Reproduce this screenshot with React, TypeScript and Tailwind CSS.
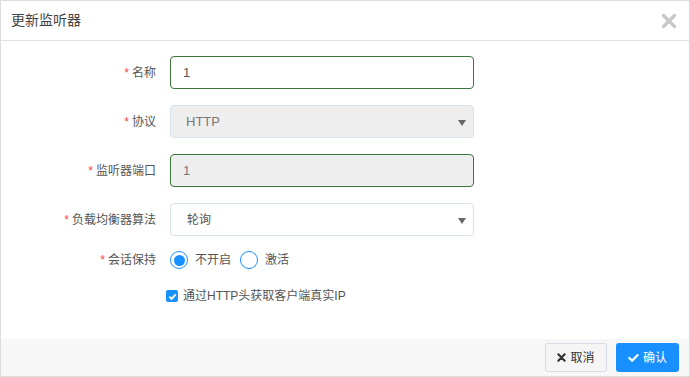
import React from "react";

const font = { fontFamily: '"Liberation Sans", "Noto Sans CJK SC", sans-serif' };

function Label({ text }: { text: string }) {
  return (
    <div className="w-[169px] shrink-0 pr-[14px] text-right text-[12px] text-[#555]">
      <span className="text-[#f04848] mr-[3px]">*</span>
      {text}
    </div>
  );
}

function Arrow() {
  return (
    <svg width="8" height="6" viewBox="0 0 8 6" className="absolute right-[7px] top-[14px]">
      <path d="M0 0 L8 0 L4 6 Z" fill="#666" />
    </svg>
  );
}

export default function App() {
  return (
    <div style={font} className="w-[690px] h-[377px] bg-white border border-[#dcdcdc] flex flex-col">
      <div className="h-[40px] shrink-0 border-b border-[#e2e2e2] flex items-center justify-between pl-[10px] pr-[12px]">
        <div className="text-[14px] text-[#444]">更新监听器</div>
        <svg width="16" height="16" viewBox="0 0 16 16">
          <path d="M2.5 2.5 L13.5 13.5 M13.5 2.5 L2.5 13.5" stroke="#c8c8c8" strokeWidth="3.4" strokeLinecap="round" />
        </svg>
      </div>
      <div className="flex-1 flex flex-col pt-[15px]">
        <div className="flex items-center h-[33px] mb-[16px]">
          <Label text="名称" />
          <div className="w-[304px] h-[33px] border border-[#3c763d] rounded-[4px] bg-white flex items-center px-[12px] text-[13px] text-[#555]">1</div>
        </div>
        <div className="flex items-center h-[33px] mb-[16px]">
          <Label text="协议" />
          <div className="relative w-[304px] h-[33px] border border-[#d8e2ec] rounded-[4px] bg-[#eeeeee] flex items-center px-[15px] text-[13px] text-[#777]">
            HTTP
            <Arrow />
          </div>
        </div>
        <div className="flex items-center h-[33px] mb-[16px]">
          <Label text="监听器端口" />
          <div className="w-[304px] h-[33px] border border-[#3c763d] rounded-[4px] bg-[#eeeeee] flex items-center px-[12px] text-[13px] text-[#777]">1</div>
        </div>
        <div className="flex items-center h-[33px] mb-[12px]">
          <Label text="负载均衡器算法" />
          <div className="relative w-[304px] h-[33px] border border-[#d8e2ec] rounded-[4px] bg-white flex items-center px-[16px] text-[12px] text-[#555]">
            轮询
            <Arrow />
          </div>
        </div>
        <div className="flex items-center h-[24px]">
          <Label text="会话保持" />
          <div className="flex items-center text-[12px] text-[#555]">
            <span className="w-[18px] h-[18px] rounded-full border-[1.5px] border-[#1890ff] flex items-center justify-center">
              <span className="w-[11px] h-[11px] rounded-full bg-[#1890ff]" />
            </span>
            <span className="ml-[7px]">不开启</span>
            <span className="ml-[9px] w-[18px] h-[18px] rounded-full border-[1.5px] border-[#1890ff]" />
            <span className="ml-[7px]">激活</span>
          </div>
        </div>
        <div className="flex items-center h-[20px] mt-[14px] pl-[165px] text-[12px] text-[#555]">
          <span className="w-[12px] h-[12px] rounded-[2px] bg-[#1890ff] flex items-center justify-center">
            <svg width="9" height="9" viewBox="0 0 10 10">
              <path d="M1.5 5.2 L4 7.6 L8.6 2.6" stroke="white" strokeWidth="2" fill="none" />
            </svg>
          </span>
          <span className="ml-[5px]">通过HTTP头获取客户端真实IP</span>
        </div>
      </div>
      <div className="h-[37px] shrink-0 bg-[#f7f7f7] flex items-center justify-end pr-[10px] gap-[9px]">
        <button className="w-[62px] h-[29px] border border-[#d6dde6] rounded-[3px] bg-[#f5f5f5] flex items-center justify-center text-[12px] text-[#333]">
          <svg width="9" height="9" viewBox="0 0 10 10" className="mr-[4px]">
            <path d="M1.5 1.5 L8.5 8.5 M8.5 1.5 L1.5 8.5" stroke="#333" strokeWidth="2.4" strokeLinecap="round" />
          </svg>
          取消
        </button>
        <button className="w-[63px] h-[29px] rounded-[3px] bg-[#1890ff] flex items-center justify-center text-[12px] text-white">
          <svg width="11" height="10" viewBox="0 0 12 10" className="mr-[4px]">
            <path d="M1.5 5 L4.5 8 L10.5 1.8" stroke="white" strokeWidth="2.4" fill="none" strokeLinecap="round" strokeLinejoin="round" />
          </svg>
          确认
        </button>
      </div>
    </div>
  );
}
